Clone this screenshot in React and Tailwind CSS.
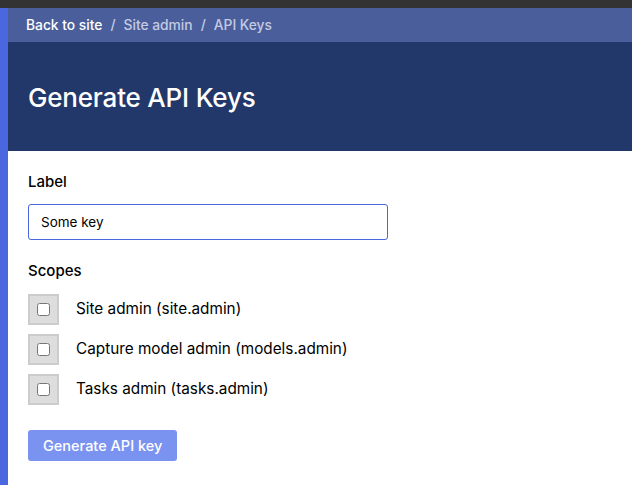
import React, { useState } from 'react'

const scopes = [
  { id: 'site.admin', label: 'Site admin (site.admin)' },
  { id: 'models.admin', label: 'Capture model admin (models.admin)' },
  { id: 'tasks.admin', label: 'Tasks admin (tasks.admin)' },
]

export default function App() {
  const [label, setLabel] = useState('Some key')
  const [checked, setChecked] = useState({})

  return (
    <div className="min-h-[485px] flex flex-col bg-white font-['Inter',sans-serif] text-black">
      {/* Top strip */}
      <div className="h-2 bg-[#333333]" />

      <div className="flex flex-1">
        {/* Left accent */}
        <div className="w-2 bg-[#4a67e0]" />

        <div className="flex-1 flex flex-col">
          {/* Breadcrumbs */}
          <div className="h-[34px] bg-[#4a5e9c] flex items-center px-[18px] text-[13.8px] font-medium">
            <span className="text-white">Back to site</span>
            <span className="text-[#c3cbe3] px-[8px]">/</span>
            <span className="text-[#c3cbe3]">Site admin</span>
            <span className="text-[#c3cbe3] px-[8px]">/</span>
            <span className="text-[#c3cbe3]">API Keys</span>
          </div>

          {/* Header */}
          <div className="h-[109px] bg-[#22386a] flex items-center px-[20px] pt-[2px]">
            <h1 className="text-white text-[26px] font-medium tracking-[-0.2px]">Generate API Keys</h1>
          </div>

          {/* Form */}
          <div className="px-[20px] pt-[21px]">
            <div className="text-[15px] font-medium leading-[20px]">Label</div>
            <input
              value={label}
              onChange={(e) => setLabel(e.target.value)}
              className="mt-[12px] w-[360px] h-[36px] border border-[#4a67e0] rounded-[3px] px-[12px] text-[13.5px] outline-none"
            />

            <div className="mt-[21px] text-[15px] font-medium leading-[20px]">Scopes</div>

            <div className="mt-[13px] flex flex-col gap-[9px]">
              {scopes.map((s) => (
                <label key={s.id} className="flex items-center gap-[17px]">
                  <span className="w-[31px] h-[31px] bg-[#dddddd] border-2 border-[#cccccc] flex items-center justify-center">
                    <input
                      type="checkbox"
                      checked={!!checked[s.id]}
                      onChange={() => setChecked({ ...checked, [s.id]: !checked[s.id] })}
                      className="w-[13px] h-[13px] m-0"
                    />
                  </span>
                  <span className="text-[15.3px] font-normal">{s.label}</span>
                </label>
              ))}
            </div>

            <button className="mt-[25px] h-[31px] px-[15px] bg-[#7b93f0] text-white text-[14.5px] font-medium rounded-[3px]">
              Generate API key
            </button>
          </div>
        </div>
      </div>
    </div>
  )
}
